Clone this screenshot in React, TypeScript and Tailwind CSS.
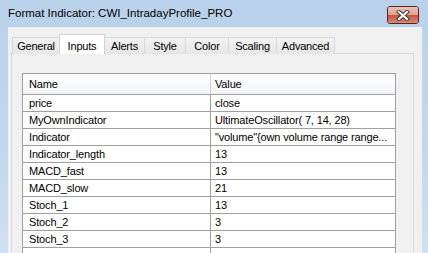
import React from "react";

const tabs = [
  { label: "General", w: "w-[48px]" },
  { label: "Inputs", w: "w-[46px]", active: true },
  { label: "Alerts", w: "w-[41px]" },
  { label: "Style", w: "w-[42px]" },
  { label: "Color", w: "w-[44px]" },
  { label: "Scaling", w: "w-[49px]" },
  { label: "Advanced", w: "w-[59px]" },
];

const rows: [string, string][] = [
  ["price", "close"],
  ["MyOwnIndicator", "UltimateOscillator( 7, 14, 28)"],
  ["Indicator", "\"volume\"{own volume range range..."],
  ["Indicator_length", "13"],
  ["MACD_fast", "13"],
  ["MACD_slow", "21"],
  ["Stoch_1", "13"],
  ["Stoch_2", "3"],
  ["Stoch_3", "3"],
  ["", ""],
];

export default function App() {
  return (
    <div
      className="w-[428px] h-[253px] overflow-hidden flex flex-col bg-[linear-gradient(180deg,#b9d1ea_0%,#c2d7ef_60%,#cfe0f3_100%)] text-black"
      style={{ fontFamily: '"Liberation Sans", Arial, sans-serif' }}
    >
      {/* Title bar */}
      <div className="h-[27px] shrink-0 flex items-center justify-between pl-[8px] pr-[9px]">
        <span className="text-[11.5px] leading-none mt-[1px]">Format Indicator: CWI_IntradayProfile_PRO</span>
        <div className="mt-[3px] w-[32px] h-[18px] rounded-[3px] border border-[#5a2323] overflow-hidden flex flex-col relative">
          <div className="h-[8px] bg-[linear-gradient(180deg,#eec0b6,#e3a091)]" />
          <div className="flex-1 bg-[linear-gradient(180deg,#c5513b,#d98a74)]" />
          <div className="absolute inset-0 flex items-center justify-center">
            <svg width="14" height="11" viewBox="0 0 14 11">
              <path d="M3 2 L11 9 M11 2 L3 9" stroke="#3a3a3a" strokeWidth="4.2" strokeLinecap="square" />
              <path d="M3 2 L11 9 M11 2 L3 9" stroke="#ffffff" strokeWidth="2.2" strokeLinecap="square" />
            </svg>
          </div>
        </div>
      </div>
      {/* Client */}
      <div className="flex-1 flex pl-[8px] pr-[6px]">
        <div className="flex-1 bg-[#f0f0f0] pl-[3px] pt-[7px] flex flex-col">
          {/* Tabs */}
          <div className="flex items-end h-[20px] pl-[1px] -mb-px relative z-10">
            {tabs.map((t, i) =>
              t.active ? (
                <div
                  key={t.label}
                  className={`${t.w} h-[20px] -ml-px bg-white border border-b-0 border-[#d2d2d2] flex items-start justify-center pt-[3px] text-[11px] tracking-[-0.2px] relative z-10`}
                >
                  {t.label}
                </div>
              ) : (
                <div
                  key={t.label}
                  className={`${t.w} h-[17px] ${i === 0 ? "" : "-ml-px"} bg-[linear-gradient(180deg,#f2f2f2,#e6e6e6)] border border-b-0 border-[#d9d9d9] flex items-center justify-center text-[11px] tracking-[-0.2px]`}
                >
                  {t.label}
                </div>
              )
            )}
          </div>
          {/* Page */}
          <div className="w-[403px] flex-1 border border-b-0 border-[#d9d9d9] bg-[#f0f0f0] pt-[19px] pl-[10px]">
            <div className="w-[374px] border-l border-t border-r border-[#a0a0a0] bg-white text-[11px] tracking-[-0.15px]">
              <div className="h-[21px] grid grid-cols-[188px_1fr] border-b border-[#a0a0a0] bg-[linear-gradient(180deg,#ffffff,#f3f4f6)]">
                <div className="pl-[6px] flex items-center border-r border-[#d5d5d5]">Name</div>
                <div className="pl-[4px] flex items-center">Value</div>
              </div>
              {rows.map(([n, v], i) => (
                <div key={i} className="h-[17px] grid grid-cols-[188px_1fr] border-b border-[#a0a0a0]">
                  <div className="pl-[6px] flex items-center border-r border-[#a0a0a0] whitespace-nowrap">{n}</div>
                  <div className="pl-[4px] flex items-center whitespace-nowrap overflow-hidden">{v}</div>
                </div>
              ))}
            </div>
          </div>
        </div>
      </div>
    </div>
  );
}
